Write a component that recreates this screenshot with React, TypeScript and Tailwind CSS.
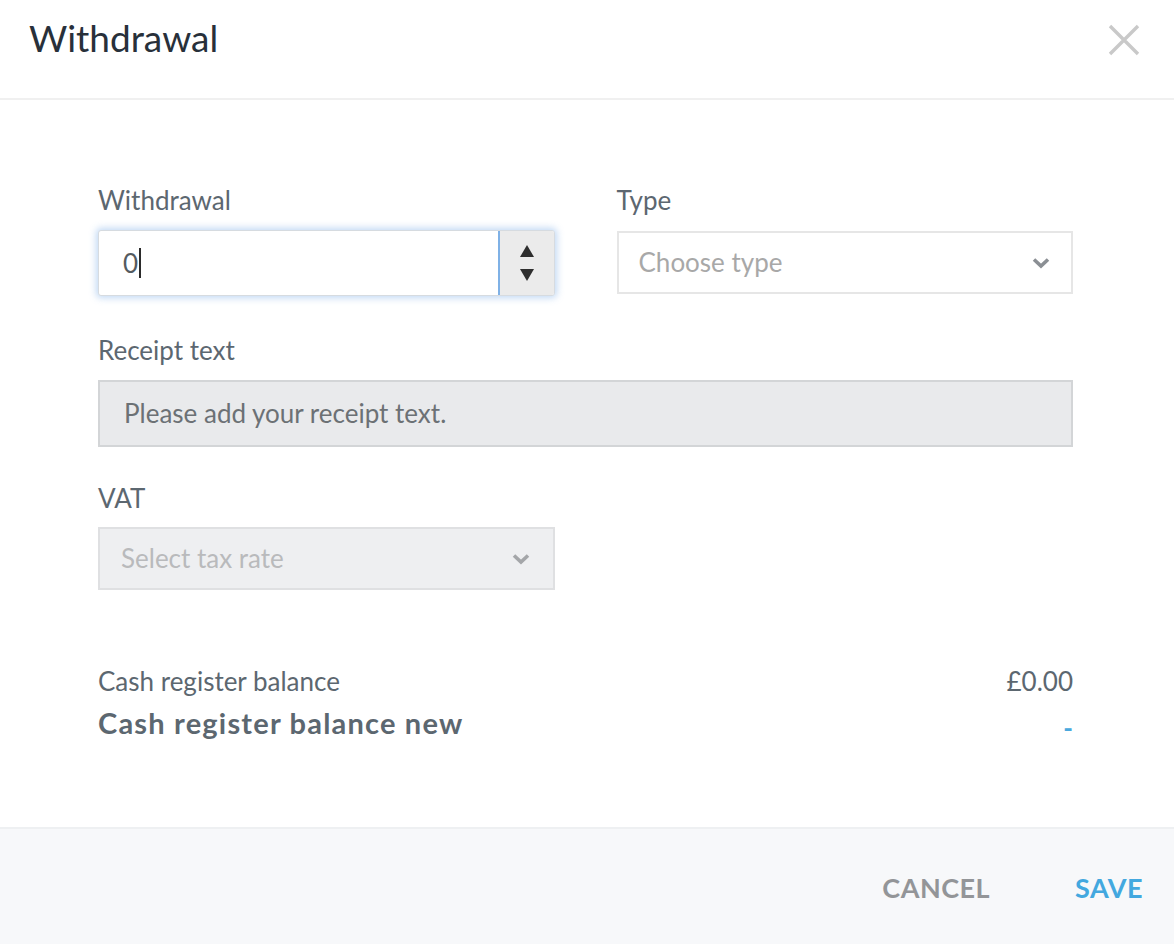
import React from 'react';

const font = { fontFamily: 'Lato, "Open Sans", sans-serif' };

function Chevron({ className }: { className?: string }) {
  return (
    <svg viewBox="0 0 20 14" className={className} fill="none">
      <path d="M3 3.5 L10 10 L17 3.5" stroke="currentColor" strokeWidth="3.6" strokeLinecap="butt" />
    </svg>
  );
}

function Label({ children }: { children: React.ReactNode }) {
  return <div className="h-[32px] leading-[32px] text-[26px] text-[#5c6770] mb-[12px]">{children}</div>;
}

export default function App() {
  return (
    <div className="w-[1174px] h-[944px] bg-white flex flex-col" style={font}>
      {/* header */}
      <div className="h-[100px] shrink-0 border-b-2 border-[#f0f0f0] flex items-start justify-between">
        <div className="pl-[29px] pt-[16px] text-[37px] leading-[44px] text-[#28303a]">Withdrawal</div>
        <button className="mt-[24px] mr-[34px] w-[32px] h-[32px] text-[#c9c9c9]">
          <svg viewBox="0 0 32 32" className="w-[32px] h-[32px]">
            <path d="M2 2 L30 30 M30 2 L2 30" stroke="currentColor" strokeWidth="3.4" />
          </svg>
        </button>
      </div>

      {/* body */}
      <div className="flex-1 flex flex-col pl-[98px] pr-[101px] pt-[84px]">
        <div className="grid grid-cols-2 gap-x-[62px] items-start">
          <div className="flex flex-col">
            <Label>Withdrawal</Label>
            <div className="mt-[2px] h-[66px] flex bg-white border border-[#d6dbe0] rounded-[3px] shadow-[0_0_7px_2px_rgba(120,170,230,0.45)] overflow-hidden">
              <div className="flex-1 flex items-center pl-[24px] text-[26px] text-[#555b60]">
                <span>0</span>
                <span className="ml-[1px] w-[2px] h-[30px] bg-[#2b2b2b]" />
              </div>
              <div className="w-[56px] bg-[#ebebeb] border-l-2 border-[#7fb1e6] flex flex-col items-center justify-center gap-[12px]">
                <svg viewBox="0 0 14 12" className="w-[14px] h-[12px]"><path d="M7 0 L14 12 L0 12 Z" fill="#2e2e2e" /></svg>
                <svg viewBox="0 0 14 12" className="w-[14px] h-[12px]"><path d="M0 0 L14 0 L7 12 Z" fill="#2e2e2e" /></svg>
              </div>
            </div>
          </div>
          <div className="flex flex-col">
            <Label>Type</Label>
            <div className="mt-[3px] h-[63px] border-2 border-[#e6e6e6] flex items-center justify-between pl-[20px] pr-[20px]">
              <span className="text-[26px] text-[#a8a8a8]">Choose type</span>
              <Chevron className="w-[20px] h-[14px] text-[#8b8f94]" />
            </div>
          </div>
        </div>

        <div className="mt-[38px] flex flex-col">
          <Label>Receipt text</Label>
          <div className="mt-[2px] h-[67px] bg-[#e9eaec] border-2 border-[#d3d5d7] flex items-center pl-[24px] text-[26px] text-[#6c7175]">
            Please add your receipt text.
          </div>
        </div>

        <div className="mt-[35px] w-[457px] flex flex-col">
          <Label>VAT</Label>
          <div className="mt-[1px] h-[63px] bg-[#eeeff1] border-2 border-[#dfe0e2] flex items-center justify-between pl-[21px] pr-[22px]">
            <span className="text-[26px] text-[#b9babc]">Select tax rate</span>
            <Chevron className="w-[20px] h-[14px] text-[#a4a6a9]" />
          </div>
        </div>

        <div className="mt-[75px] flex justify-between items-center h-[32px] text-[26px] text-[#5c6770]">
          <span>Cash register balance</span>
          <span>£0.00</span>
        </div>
        <div className="mt-[8px] flex justify-between items-center h-[36px]">
          <span className="text-[29px] font-bold text-[#5c6770] tracking-[1.2px]">Cash register balance new</span>
          <span className="text-[26px] font-bold text-[#4aa8dd] mt-[10px]">-</span>
        </div>
      </div>

      {/* footer */}
      <div className="h-[117px] shrink-0 bg-[#f7f8fa] border-t-2 border-[#eef0f2] flex items-center justify-end pr-[31px] pt-[3px] gap-[85px]">
        <button className="text-[27px] font-bold text-[#939598] tracking-[0.5px]">CANCEL</button>
        <button className="text-[27px] font-bold text-[#43a8df] tracking-[0.5px]">SAVE</button>
      </div>
    </div>
  );
}
